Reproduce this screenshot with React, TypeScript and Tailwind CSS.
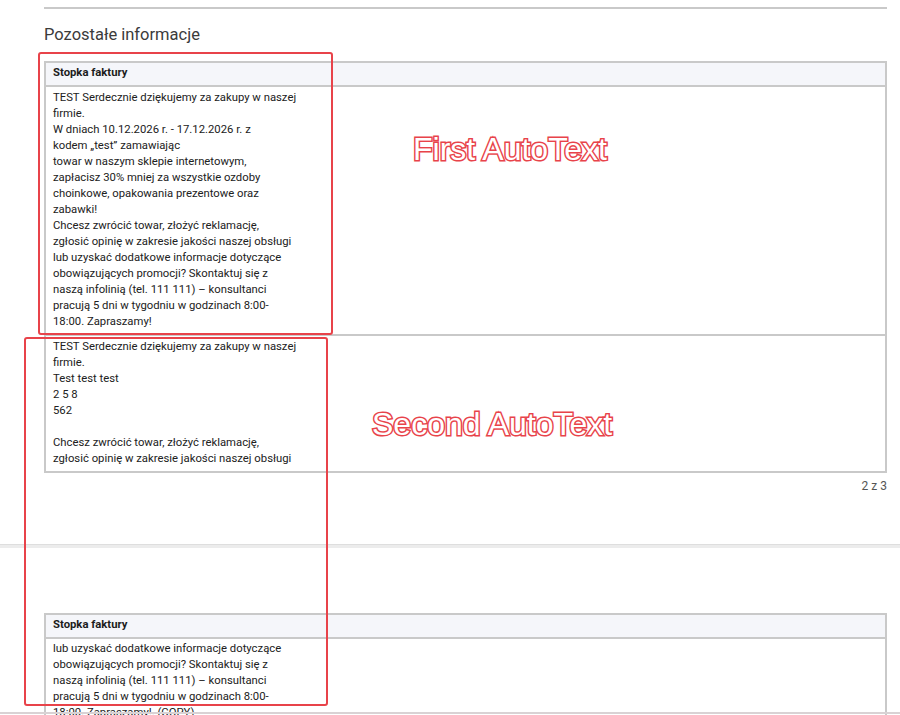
const firstFooter = [
  'TEST Serdecznie dziękujemy za zakupy w naszej',
  'firmie.',
  'W dniach 10.12.2026 r. - 17.12.2026 r. z',
  'kodem „test” zamawiając',
  'towar w naszym sklepie internetowym,',
  'zapłacisz 30% mniej za wszystkie ozdoby',
  'choinkowe, opakowania prezentowe oraz',
  'zabawki!',
  'Chcesz zwrócić towar, złożyć reklamację,',
  'zgłosić opinię w zakresie jakości naszej obsługi',
  'lub uzyskać dodatkowe informacje dotyczące',
  'obowiązujących promocji? Skontaktuj się z',
  'naszą infolinią (tel. 111 111) – konsultanci',
  'pracują 5 dni w tygodniu w godzinach 8:00-',
  '18:00. Zapraszamy!',
]

const secondFooter = [
  'TEST Serdecznie dziękujemy za zakupy w naszej',
  'firmie.',
  'Test test test',
  '2 5 8',
  '562',
  '',
  'Chcesz zwrócić towar, złożyć reklamację,',
  'zgłosić opinię w zakresie jakości naszej obsługi',
]

const copyFooter = [
  'lub uzyskać dodatkowe informacje dotyczące',
  'obowiązujących promocji? Skontaktuj się z',
  'naszą infolinią (tel. 111 111) – konsultanci',
  'pracują 5 dni w tygodniu w godzinach 8:00-',
  '18:00. Zapraszamy!. (COPY)',
]

function Lines({ lines }: { lines: string[] }) {
  return (
    <div className="flex flex-col">
      {lines.map((line, i) => (
        <div key={i} className="h-4 whitespace-nowrap">
          {line}
        </div>
      ))}
    </div>
  )
}

function FooterHeader() {
  return (
    <div className="border-b-2 border-[#c9c9c9] bg-[#f5f6fa] px-[7px] pt-[2px] pb-[4px] font-bold text-[#1c1c1c]">
      Stopka faktury
    </div>
  )
}

function Annotation({ label, className }: { label: string; className: string }) {
  return (
    <div
      className={`absolute whitespace-nowrap font-['Liberation_Sans',Arial,sans-serif] text-[32px] leading-none text-white [-webkit-text-stroke:3px_#e8434a] [paint-order:stroke_fill] ${className}`}
    >
      {label}
    </div>
  )
}

export default function App() {
  return (
    <div className="relative flex h-[715px] flex-col overflow-hidden bg-white font-['Roboto',sans-serif] text-[11.3px] leading-4 text-[#212121]">
      {/* page 2 */}
      <section className="flex flex-col pl-[44px] pr-[13px] pt-[7px]">
        <div className="h-[2px] bg-[#c9c9c9]" />
        <h2 className="mt-[14px] text-[16.5px] leading-6 text-[#3b3b3b]">Pozostałe informacje</h2>

        <div className="mt-[14px] flex flex-col border-2 border-[#c9c9c9]">
          <FooterHeader />
          <div className="border-b-2 border-[#c9c9c9] px-[7px] pt-[3px] pb-[4px]">
            <Lines lines={firstFooter} />
          </div>
          <div className="px-[7px] pt-[3px] pb-[4px]">
            <Lines lines={secondFooter} />
          </div>
        </div>

        <div className="mt-[5px] self-end text-[12px] text-[#555]">2 z 3</div>
      </section>

      {/* page break */}
      <div className="mt-[50px] h-[4px] shrink-0 border-t border-[#dedede] bg-[#ececec]" />

      {/* page 3 */}
      <section className="flex flex-col pl-[44px] pr-[13px] pt-[65px]">
        <div className="flex flex-col border-2 border-[#c9c9c9]">
          <FooterHeader />
          <div className="px-[7px] pt-[2px] pb-[4px]">
            <Lines lines={copyFooter} />
          </div>
        </div>
      </section>

      {/* autotext markers */}
      <div className="absolute left-[38px] top-[52px] h-[283px] w-[295px] rounded-[3px] border-2 border-[#e8434a]" />
      <div className="absolute left-[24px] top-[337px] h-[369px] w-[304px] rounded-[3px] border-2 border-[#e8434a]" />
      <Annotation label="First AutoText" className="left-[413px] top-[133px]" />
      <Annotation label="Second AutoText" className="left-[372px] top-[408px]" />

      <div className="absolute inset-x-0 top-[712px] h-[2px] bg-[#d9d2d4]" />
    </div>
  )
}
